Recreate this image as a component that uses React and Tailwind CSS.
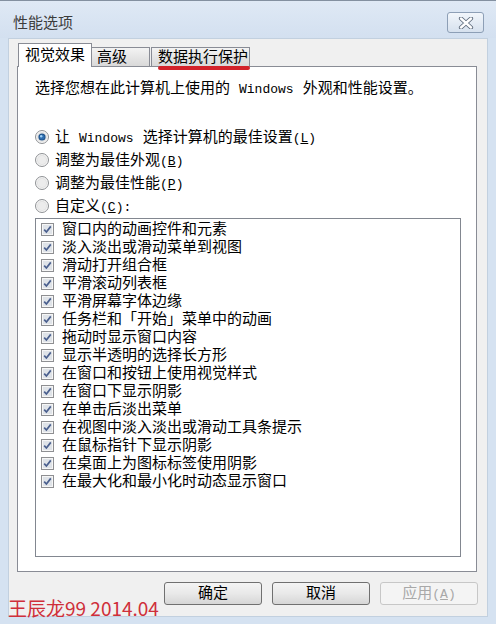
const effects = [
  '窗口内的动画控件和元素',
  '淡入淡出或滑动菜单到视图',
  '滑动打开组合框',
  '平滑滚动列表框',
  '平滑屏幕字体边缘',
  '任务栏和「开始」菜单中的动画',
  '拖动时显示窗口内容',
  '显示半透明的选择长方形',
  '在窗口和按钮上使用视觉样式',
  '在窗口下显示阴影',
  '在单击后淡出菜单',
  '在视图中淡入淡出或滑动工具条提示',
  '在鼠标指针下显示阴影',
  '在桌面上为图标标签使用阴影',
  '在最大化和最小化时动态显示窗口',
];

function Lat({ children }) {
  return <span className="text-[13px]">{children}</span>;
}

function Mnemonic({ letter }) {
  return (
    <Lat>
      (<u>{letter}</u>)
    </Lat>
  );
}

function RadioMark({ checked }) {
  return (
    <svg width="14" height="14" viewBox="0 0 14 14" className="shrink-0">
      <circle cx="7" cy="7" r="6.5" fill="#f4f4f4" stroke="#8f9194" />
      <circle cx="7" cy="7" r="5" fill="#e2e2e2" />
      <circle cx="7" cy="7" r="4" fill="#ececec" />
      {checked && (
        <>
          <circle cx="7" cy="7" r="3.6" fill="#1c4f86" />
          <circle cx="7" cy="7" r="2.6" fill="#2f6eb0" />
          <circle cx="6.2" cy="6.2" r="1.2" fill="#9fd0f5" />
        </>
      )}
    </svg>
  );
}

function CheckMark() {
  return (
    <svg width="13" height="13" viewBox="0 0 13 13" className="shrink-0">
      <rect x="0.5" y="0.5" width="12" height="12" fill="#f6f6f6" stroke="#8e8f92" />
      <rect x="2" y="2" width="9" height="9" fill="#dfe3e8" />
      <path d="M3.2 6.6 L5.4 9 L9.8 3.4" fill="none" stroke="#4a5f8e" strokeWidth="1.7" />
    </svg>
  );
}

function Button({ children, disabled }) {
  return (
    <button
      type="button"
      disabled={disabled}
      className={
        disabled
          ? 'w-[98px] h-[23px] rounded-[3px] border border-[#c7c7c7] bg-[#f4f4f4] text-[#a8a8a8] text-[15px] leading-[21px] pt-[1px]'
          : 'w-[98px] h-[23px] rounded-[3px] border border-[#707070] bg-gradient-to-b from-[#f4f4f4] via-[#e9e9e9] to-[#d6d6d6] text-black text-[15px] leading-[21px] pt-[1px]'
      }
    >
      {children}
    </button>
  );
}

export default function App() {
  return (
    <div className="relative w-[496px] h-[624px] overflow-hidden bg-[#d5e2f1] border-t border-[#8390a0] font-['Liberation_Mono','Noto_Sans_CJK_SC',monospace] text-[15px] text-black">
      {/* title bar */}
      <div className="h-[37px] flex items-start justify-between pl-[13px] pr-[12px] pt-[11px] bg-gradient-to-b from-[#dfe9f5] to-[#d3e0f0]">
        <span className="mt-[4px] leading-[18px] text-[#3c3c3c]">性能选项</span>
        <div className="w-[37px] h-[21px] rounded-[3px] border border-[#8d9fb6] bg-gradient-to-b from-[#f2f6fb] to-[#d6e1ee] flex items-center justify-center">
          <svg width="16" height="12" viewBox="0 0 16 12">
            <path d="M3 1.5 L13 10.5 M13 1.5 L3 10.5" stroke="#5e6b7c" strokeWidth="4.2" strokeLinecap="round" />
            <path d="M3 1.5 L13 10.5 M13 1.5 L3 10.5" stroke="#ffffff" strokeWidth="2.4" strokeLinecap="round" />
          </svg>
        </div>
      </div>

      {/* client area */}
      <div className="mx-[8px] h-[579px] bg-[#f0f0f0] border border-[#c2d0df] pt-[4px]">
        {/* tabs */}
        <div className="h-[23px] flex items-end pl-[9px]">
          <div className="relative z-10 w-[74px] h-[24px] -mb-[1px] bg-white border border-b-0 border-[#898c95] flex items-center justify-center leading-[18px] pt-[3px]">
            视觉效果
          </div>
          <div className="w-[58px] h-[19px] border border-b-0 border-l-0 border-[#898c95] bg-gradient-to-b from-[#f3f3f3] to-[#d9d9d9] flex items-center pl-[5px] leading-[18px] pt-[4px]">
            高级
          </div>
          <div className="relative ml-[1px] w-[99px] h-[19px] border border-b-0 border-[#898c95] bg-gradient-to-b from-[#f3f3f3] to-[#d9d9d9] flex items-center pl-[6px] leading-[18px] pt-[4px]">
            数据执行保护
            <div className="absolute z-20 left-[6px] -bottom-[4px] w-[92px] h-[4px] rounded-[2px] bg-[#d3222a]" />
          </div>
        </div>

        {/* tab panel */}
        <div className="ml-[8px] w-[460px] h-[506px] border border-[#898c95] bg-white pl-[17px]">
          <p className="mt-[14px] leading-[18px]">
            选择您想在此计算机上使用的 <Lat>Windows</Lat> 外观和性能设置。
          </p>

          <div className="mt-[26px] flex flex-col">
            <div className="h-[23px] flex items-center gap-[6px] leading-[18px]">
              <RadioMark checked />
              <span className="pt-[4px]">
                让 <Lat>Windows</Lat> 选择计算机的最佳设置<Mnemonic letter="L" />
              </span>
            </div>
            <div className="h-[23px] flex items-center gap-[6px] leading-[18px]">
              <RadioMark />
              <span className="pt-[4px]">
                调整为最佳外观<Mnemonic letter="B" />
              </span>
            </div>
            <div className="h-[23px] flex items-center gap-[6px] leading-[18px]">
              <RadioMark />
              <span className="pt-[4px]">
                调整为最佳性能<Mnemonic letter="P" />
              </span>
            </div>
            <div className="h-[23px] flex items-center gap-[6px] leading-[18px]">
              <RadioMark />
              <span className="pt-[4px]">
                自定义<Mnemonic letter="C" />
                <Lat>:</Lat>
              </span>
            </div>
          </div>

          {/* effects list */}
          <div className="mt-[1px] w-[426px] h-[339px] border border-[#828790] bg-white pt-[1px] pl-[5px]">
            {effects.map((label) => (
              <div key={label} className="h-[18px] flex items-center gap-[8px] leading-[18px]">
                <CheckMark />
                <span className="pt-[4px]">{label}</span>
              </div>
            ))}
          </div>
        </div>

        {/* buttons */}
        <div className="mt-[10px] flex justify-end gap-[10px] pr-[9px]">
          <Button>确定</Button>
          <Button>取消</Button>
          <Button disabled>
            应用<Mnemonic letter="A" />
          </Button>
        </div>
      </div>

      {/* author watermark */}
      <div className="absolute left-[8px] top-[595px] text-[19px] leading-[24px] text-[#cf2f3a] font-['Noto_Sans_CJK_SC',sans-serif]">
        王辰龙99 2014.04
      </div>
    </div>
  );
}
